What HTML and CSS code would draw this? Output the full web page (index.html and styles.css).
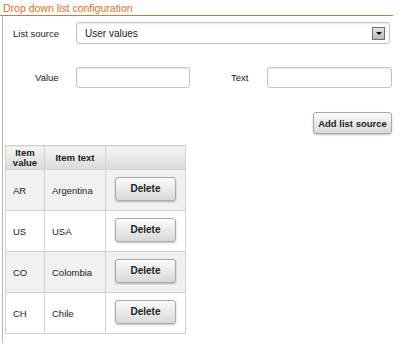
FILE: index.html
```html
<!DOCTYPE html>
<html>
<head>
    <meta charset="utf-8">
    <title>Drop down list configuration</title>
    <link rel="stylesheet" href="styles.css">
</head>
<body>
    <div class="section-title">Drop down list configuration</div>
    <div class="section-body">
        <div class="form-row first">
            <label class="field-label">List source</label>
            <div class="fake-select">
                <span>User values</span>
                <span class="select-arrow"></span>
            </div>
        </div>
        <div class="form-row second">
            <label class="field-label indent">Value</label>
            <input type="text" class="text-input value-input">
            <label class="field-label text-label">Text</label>
            <input type="text" class="text-input text-input-wide">
        </div>
        <div class="button-row">
            <button class="btn add-btn">Add list source</button>
        </div>
        <table class="items">
            <thead>
                <tr>
                    <th class="col-value">Item<br>value</th>
                    <th class="col-text">Item text</th>
                    <th class="col-action"></th>
                </tr>
            </thead>
            <tbody>
                <tr class="alt">
                    <td>AR</td>
                    <td>Argentina</td>
                    <td class="action"><button class="btn delete-btn">Delete</button></td>
                </tr>
                <tr>
                    <td>US</td>
                    <td>USA</td>
                    <td class="action"><button class="btn delete-btn">Delete</button></td>
                </tr>
                <tr class="alt">
                    <td>CO</td>
                    <td>Colombia</td>
                    <td class="action"><button class="btn delete-btn">Delete</button></td>
                </tr>
                <tr>
                    <td>CH</td>
                    <td>Chile</td>
                    <td class="action"><button class="btn delete-btn">Delete</button></td>
                </tr>
            </tbody>
        </table>
    </div>
</body>
</html>
```

FILE: styles.css
```css
body {
    margin: 0;
    font-family: "Liberation Sans", Arial, sans-serif;
    font-size: 10px;
    color: #1a1a1a;
    background: #fff;
}
.section-title {
    width: 390px;
    padding: 3px 0 1px 3px;
    height: 11px;
    line-height: 11px;
    font-size: 10.5px;
    color: #e0701c;
    border-bottom: 1px solid #d8763a;
}
.section-body {
    margin-left: 2px;
    border-left: 1px solid #b4b4b4;
    min-height: 327px;
    overflow: hidden;
}
.form-row {
    display: flex;
    align-items: center;
}
.form-row.first {
    margin-top: 6px;
}
.form-row.second {
    margin-top: 23px;
}
.field-label {
    box-sizing: border-box;
    width: 73px;
    padding-left: 10px;
    font-size: 9.5px;
}
.field-label.indent {
    padding-left: 32px;
}
.field-label.text-label {
    width: 36px;
    padding-left: 0;
    margin-left: 41px;
}
.fake-select {
    box-sizing: border-box;
    width: 314px;
    height: 22px;
    border: 1px solid #c4c4c4;
    border-radius: 3px;
    box-shadow: inset 0 1px 2px rgba(0,0,0,0.08);
    display: flex;
    align-items: center;
    justify-content: space-between;
    padding: 0 4px 0 8px;
    font-size: 10px;
}
.select-arrow {
    width: 11px;
    height: 11px;
    border: 1px solid #6e6e6e;
    background: linear-gradient(#e4e4e4, #b8b8b8);
    position: relative;
}
.select-arrow::after {
    content: "";
    position: absolute;
    left: 3px;
    top: 4px;
    border-left: 3px solid transparent;
    border-right: 3px solid transparent;
    border-top: 3px solid #000;
}
.text-input {
    box-sizing: border-box;
    height: 21px;
    border: 1px solid #c4c4c4;
    border-radius: 3px;
    box-shadow: inset 0 1px 2px rgba(0,0,0,0.08);
    margin: 0;
    padding: 0 4px;
}
.value-input {
    width: 114px;
}
.text-input-wide {
    width: 125px;
}
.button-row {
    display: flex;
    justify-content: flex-end;
    width: 389px;
    margin-top: 24px;
}
.btn {
    font-family: "Liberation Sans", Arial, sans-serif;
    font-weight: bold;
    font-size: 9.5px;
    color: #222;
    background: linear-gradient(#fbfbfb, #d9d9d9);
    border: 1px solid #a9a9a9;
    border-radius: 3px;
    box-shadow: 0 1px 2px rgba(0,0,0,0.25);
    padding: 0;
    cursor: pointer;
}
.add-btn {
    width: 79px;
    height: 22px;
}
.items {
    margin: 11px 0 0 2px;
    border-collapse: collapse;
    border: 1px solid #d2d2d2;
    font-size: 9.5px;
}
.items th {
    height: 23px;
    padding: 0;
    font-weight: bold;
    line-height: 10px;
    background: linear-gradient(#f6f6f6, #dadada);
    border: 1px solid #d2d2d2;
    text-align: center;
}
.col-value {
    width: 38px;
}
.col-text {
    width: 60px;
}
.col-action {
    width: 79px;
}
.items td {
    height: 40px;
    padding: 0 0 0 7px;
    border: 1px solid #d2d2d2;
}
.items tr.alt td {
    background: #f1f1f1;
}
.items td.action {
    padding: 0;
    text-align: center;
    vertical-align: middle;
}
.delete-btn {
    width: 61px;
    height: 24px;
    margin-bottom: 3px;
    font-size: 10px;
}
```
